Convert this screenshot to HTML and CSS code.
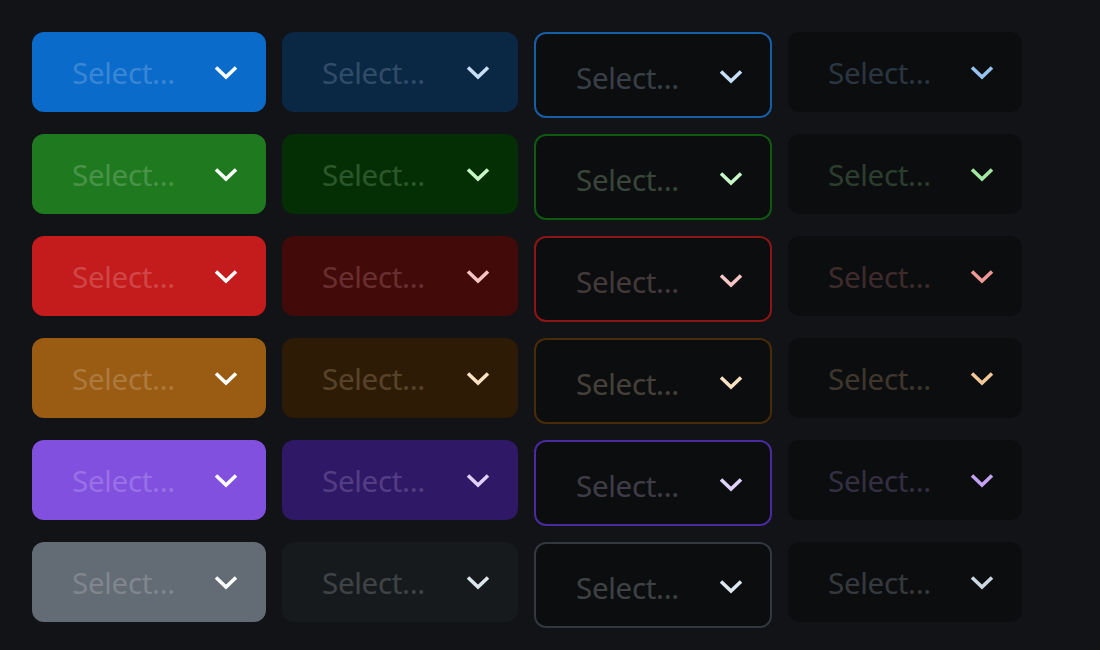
FILE: index.html
```html
<!DOCTYPE html>
<html>
<head>
<meta charset="utf-8">
<link rel="stylesheet" href="styles.css">
</head>
<body>
<div class="grid">
  <div class="sel solid primary"><span class="ph">Select...</span><svg class="chev" viewBox="0 0 24 15"><polyline points="2,2.5 12,12 22,2.5"/></svg></div>
  <div class="sel soft primary"><span class="ph">Select...</span><svg class="chev" viewBox="0 0 24 15"><polyline points="2,2.5 12,12 22,2.5"/></svg></div>
  <div class="sel outlined primary"><span class="ph">Select...</span><svg class="chev" viewBox="0 0 24 15"><polyline points="2,2.5 12,12 22,2.5"/></svg></div>
  <div class="sel plain primary"><span class="ph">Select...</span><svg class="chev" viewBox="0 0 24 15"><polyline points="2,2.5 12,12 22,2.5"/></svg></div>

  <div class="sel solid success"><span class="ph">Select...</span><svg class="chev" viewBox="0 0 24 15"><polyline points="2,2.5 12,12 22,2.5"/></svg></div>
  <div class="sel soft success"><span class="ph">Select...</span><svg class="chev" viewBox="0 0 24 15"><polyline points="2,2.5 12,12 22,2.5"/></svg></div>
  <div class="sel outlined success"><span class="ph">Select...</span><svg class="chev" viewBox="0 0 24 15"><polyline points="2,2.5 12,12 22,2.5"/></svg></div>
  <div class="sel plain success"><span class="ph">Select...</span><svg class="chev" viewBox="0 0 24 15"><polyline points="2,2.5 12,12 22,2.5"/></svg></div>

  <div class="sel solid danger"><span class="ph">Select...</span><svg class="chev" viewBox="0 0 24 15"><polyline points="2,2.5 12,12 22,2.5"/></svg></div>
  <div class="sel soft danger"><span class="ph">Select...</span><svg class="chev" viewBox="0 0 24 15"><polyline points="2,2.5 12,12 22,2.5"/></svg></div>
  <div class="sel outlined danger"><span class="ph">Select...</span><svg class="chev" viewBox="0 0 24 15"><polyline points="2,2.5 12,12 22,2.5"/></svg></div>
  <div class="sel plain danger"><span class="ph">Select...</span><svg class="chev" viewBox="0 0 24 15"><polyline points="2,2.5 12,12 22,2.5"/></svg></div>

  <div class="sel solid warning"><span class="ph">Select...</span><svg class="chev" viewBox="0 0 24 15"><polyline points="2,2.5 12,12 22,2.5"/></svg></div>
  <div class="sel soft warning"><span class="ph">Select...</span><svg class="chev" viewBox="0 0 24 15"><polyline points="2,2.5 12,12 22,2.5"/></svg></div>
  <div class="sel outlined warning"><span class="ph">Select...</span><svg class="chev" viewBox="0 0 24 15"><polyline points="2,2.5 12,12 22,2.5"/></svg></div>
  <div class="sel plain warning"><span class="ph">Select...</span><svg class="chev" viewBox="0 0 24 15"><polyline points="2,2.5 12,12 22,2.5"/></svg></div>

  <div class="sel solid purple"><span class="ph">Select...</span><svg class="chev" viewBox="0 0 24 15"><polyline points="2,2.5 12,12 22,2.5"/></svg></div>
  <div class="sel soft purple"><span class="ph">Select...</span><svg class="chev" viewBox="0 0 24 15"><polyline points="2,2.5 12,12 22,2.5"/></svg></div>
  <div class="sel outlined purple"><span class="ph">Select...</span><svg class="chev" viewBox="0 0 24 15"><polyline points="2,2.5 12,12 22,2.5"/></svg></div>
  <div class="sel plain purple"><span class="ph">Select...</span><svg class="chev" viewBox="0 0 24 15"><polyline points="2,2.5 12,12 22,2.5"/></svg></div>

  <div class="sel solid neutral"><span class="ph">Select...</span><svg class="chev" viewBox="0 0 24 15"><polyline points="2,2.5 12,12 22,2.5"/></svg></div>
  <div class="sel soft neutral"><span class="ph">Select...</span><svg class="chev" viewBox="0 0 24 15"><polyline points="2,2.5 12,12 22,2.5"/></svg></div>
  <div class="sel outlined neutral"><span class="ph">Select...</span><svg class="chev" viewBox="0 0 24 15"><polyline points="2,2.5 12,12 22,2.5"/></svg></div>
  <div class="sel plain neutral"><span class="ph">Select...</span><svg class="chev" viewBox="0 0 24 15"><polyline points="2,2.5 12,12 22,2.5"/></svg></div>
</div>
</body>
</html>
```

FILE: styles.css
```css
html, body {
  margin: 0;
  padding: 0;
  background: #111317;
}
body {
  font-family: "Noto Sans", "Open Sans", sans-serif;
}
.grid {
  display: grid;
  grid-template-columns: 234px 236px 238px 234px;
  column-gap: 16px;
  row-gap: 16px;
  align-items: start;
  padding: 32px;
}
.sel {
  box-sizing: border-box;
  height: 80px;
  border-radius: 12px;
  display: flex;
  align-items: center;
  justify-content: space-between;
  padding: 0 28px 0 40px;
}
.ph {
  font-size: 29.5px;
  line-height: 40px;
  letter-spacing: -0.3px;
  position: relative;
  top: 1px;
}
.chev {
  width: 24px;
  height: 15px;
  flex: none;
}
.chev polyline {
  fill: none;
  stroke: currentColor;
  stroke-width: 3.6;
  stroke-linecap: butt;
  stroke-linejoin: miter;
}
.outlined {
  height: 86px;
  border: 2px solid;
  padding: 3px 27px 0 40px;
  background: #0b0d0e;
}
.plain {
  background: #0b0d0e;
}

/* solid */
.solid { color: #fff; }
.solid .ph { color: rgba(255,255,255,0.2); }
.solid.primary { background: #0b6bcb; }
.solid.success { background: #1f7a1f; }
.solid.danger { background: #c41c1c; }
.solid.warning { background: #9a5b13; }
.solid.purple { background: #8250df; }
.solid.neutral { background: #636b74; }

/* soft */
.soft.primary { background: #0a2744; color: #c7dff7; }
.soft.success { background: #042f04; color: #c7f7c7; }
.soft.danger { background: #430a0a; color: #f7c5c5; }
.soft.warning { background: #2e1b05; color: #fce1c2; }
.soft.purple { background: #2f1866; color: #e2d2fb; }
.soft.neutral { background: #171a1c; color: #dde7ee; }

/* outlined */
.outlined.primary { border-color: #185ea5; color: #c7dff7; }
.outlined.success { border-color: #0f5a0f; color: #c7f7c7; }
.outlined.danger { border-color: #8c1515; color: #f7c5c5; }
.outlined.warning { border-color: #492b08; color: #fce1c2; }
.outlined.purple { border-color: #4a2a9e; color: #e2d2fb; }
.outlined.neutral { border-color: #32383e; color: #dde7ee; }

/* plain */
.plain.primary { color: #97c3f0; }
.plain.success { color: #a1e8a1; }
.plain.danger { color: #f09898; }
.plain.warning { color: #f3c896; }
.plain.purple { color: #c4a3f5; }
.plain.neutral { color: #cdd7e1; }

.soft .ph { opacity: 0.2; }
.plain .ph { opacity: 0.22; }
.outlined .ph { opacity: 0.24; }
```
